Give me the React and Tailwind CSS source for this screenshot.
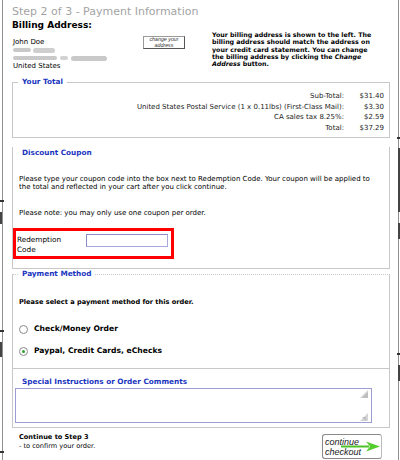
import React from 'react';

const rows = [
  { label: 'Sub-Total:', value: '$31.40' },
  { label: 'United States Postal Service (1 x 0.11lbs) (First-Class Mail):', value: '$3.30' },
  { label: 'CA sales tax 8.25%:', value: '$2.59' },
  { label: 'Total:', value: '$37.29' },
];

function Radio({ checked }) {
  return (
    <div className="w-[9px] h-[9px] rounded-full border border-[#8a8a8a] bg-white flex items-center justify-center shrink-0">
      {checked && <div className="w-[3px] h-[3px] rounded-full bg-[#2fa02f]" />}
    </div>
  );
}

function App() {
  return (
    <div className="relative w-[400px] h-[460px] overflow-hidden bg-white text-black font-['DejaVu_Sans',sans-serif]">
      <div className="ml-[2px] w-[397px] h-[460px] border-x border-[#8f8f8f]">
        {/* billing header */}
        <div className="pl-[9px]">
          <div className="pt-[6px] text-[11px] leading-[12px] text-[#a3a3a3]">Step 2 of 3 - Payment Information</div>
          <div className="mt-[2px] text-[9px] leading-[10px] font-bold">Billing Address:</div>
          <div className="mt-[1px] flex items-start">
            <div className="w-[131px] pl-[1px] pt-[7px] text-[7px] leading-[8px]">
              <div>John Doe</div>
              <div className="h-[8px] flex items-center gap-[2px]">
                <div className="w-[18px] h-[4px] rounded-full bg-[#c9c9c9] blur-[0.6px]" />
                <div className="w-[22px] h-[5px] rounded-full bg-[#cfcfcf] blur-[0.6px]" />
              </div>
              <div className="h-[8px] flex items-center gap-[3px]">
                <div className="w-[44px] h-[4px] rounded-full bg-[#c9c9c9] blur-[0.6px]" />
                <div className="w-[8px] h-[4px] rounded-full bg-[#d2d2d2] blur-[0.6px]" />
                <div className="w-[36px] h-[5px] rounded-full bg-[#c9c9c9] blur-[0.6px]" />
              </div>
              <div>United States</div>
            </div>
            <div className="mt-[5px] w-[42px] h-[13px] border border-[#9a9a9a] border-r-[#555] border-b-[#555] bg-white flex flex-col items-center justify-center font-['Liberation_Sans',sans-serif] italic text-[5.3px] leading-[5.3px] text-[#333]">
              <span>change your</span>
              <span>address</span>
            </div>
            <div className="ml-[27px] w-[180px] whitespace-nowrap text-[6.3px] leading-[7.3px] font-bold">
              Your billing address is shown to the left. The<br />
              billing address should match the address on<br />
              your credit card statement. You can change<br />
              the billing address by clicking the <i>Change</i><br />
              <i>Address</i> button.
            </div>
          </div>
        </div>

        {/* totals */}
        <fieldset className="mt-[7px] ml-[9px] w-[378px] border border-[#c8c8c8] px-[5px] pt-[4px] pb-[4px]">
          <legend className="px-[4px] text-[7.3px] leading-[10px] font-bold text-[#1a35c0]">Your Total</legend>
          <div className="grid grid-cols-[1fr_36px] gap-x-[4px] text-[7px] leading-[10.5px] text-right text-[#222]">
            {rows.map((r) => (
              <React.Fragment key={r.label}>
                <span>{r.label}</span>
                <span>{r.value}</span>
              </React.Fragment>
            ))}
          </div>
        </fieldset>

        {/* coupon */}
        <div className="mt-[9px] ml-[9px] w-[378px] border-x border-b border-[#c8c8c8] px-[6px] pt-[1px] pb-[9px] text-[7px] leading-[8px]">
          <div className="ml-[3px] text-[7.3px] leading-[10px] font-bold text-[#1a35c0]">Discount Coupon</div>
          <p className="mt-[17px]">
            Please type your coupon code into the box next to Redemption Code. Your coupon will be applied to the total and reflected in your cart after you click continue.
          </p>
          <p className="mt-[18px]">Please note: you may only use one coupon per order.</p>
          <div className="mt-[11px] -ml-[6px] w-[161px] h-[31px] border-[3px] border-[#ff0000] pl-[1px] pt-[4px] flex items-start text-[7.3px] leading-[10px]">
            <div className="w-[69px]">Redemption<br />Code</div>
            <div className="mt-[-1px] w-[82px] h-[13px] border border-[#a8a8dc] border-t-[#8c8cc8] border-l-[#8c8cc8] bg-white" />
          </div>
        </div>

        {/* payment method */}
        <fieldset className="ml-[9px] w-[378px] border border-[#c8c8c8] [border-top-style:dotted] px-[6px] pt-[19px] pb-[12px]">
          <legend className="px-[3px] text-[7.3px] leading-[10px] font-bold text-[#1a35c0]">Payment Method</legend>
          <div className="text-[6.6px] leading-[8px] font-bold">Please select a payment method for this order.</div>
          <div className="mt-[18px] h-[10px] flex items-center gap-[6px] text-[7.6px] font-bold">
            <Radio />
            <span>Check/Money Order</span>
          </div>
          <div className="mt-[12px] h-[10px] flex items-center gap-[6px] text-[7.6px] font-bold">
            <Radio checked />
            <span>Paypal, Credit Cards, eChecks</span>
          </div>
        </fieldset>

        {/* comments */}
        <div className="ml-[9px] w-[378px] border-x border-b border-[#c8c8c8] pl-[2px] pt-[8px] pb-[4px]">
          <div className="ml-[7px] text-[7.3px] leading-[10px] font-bold text-[#1a35c0]">Special Instructions or Order Comments</div>
          <div className="mt-[1px] w-[357px] h-[35px] border border-[#9d9dd6] bg-white flex justify-end">
            <div className="w-[10px] mr-[2px] py-[1px] flex flex-col justify-between items-center">
              <svg width="8" height="8" viewBox="0 0 8 8">
                <path d="M8 0 L8 8 L0 8 Z" fill="#d4d4d4" />
                <path d="M8 2 L8 8 L2 8 Z" fill="#bdbdbd" />
              </svg>
              <svg width="8" height="8" viewBox="0 0 8 8">
                <path d="M8 0 L8 8 L0 8 Z" fill="#d4d4d4" />
                <path d="M2 4 L6 4 L6 8 Z" fill="#bdbdbd" />
              </svg>
            </div>
          </div>
        </div>

        {/* continue */}
        <div className="pl-[16px] pr-[16px] flex items-start">
          <div className="mt-[5px] text-[6.6px] leading-[9px]">
            <div className="font-bold">Continue to Step 3</div>
            <div>- to confirm your order.</div>
          </div>
          <div className="relative ml-auto mt-[6px] w-[60px] h-[25px] rounded-[3px] border border-[#8a8a8a] border-r-[#bbb] bg-white pl-[2px] pt-[2px] font-['Liberation_Sans',sans-serif] italic text-[9px] leading-[10px] text-[#222]">
            <div>continue</div>
            <div>checkout</div>
            <svg className="absolute left-[18px] top-[6px]" width="40" height="11" viewBox="0 0 40 11">
              <path d="M0 5.5 L28 5.5" stroke="#4cc12a" strokeWidth="2" />
              <path d="M25 0.5 L39 5.5 L25 10.5 L29 5.5 Z" fill="#55cc2e" />
            </svg>
          </div>
        </div>
      </div>

      {/* collage edge artifacts */}
      <div className="absolute left-0 top-[200px] w-[4px] h-[2px] bg-[#333]" />
      <div className="absolute left-0 top-[212px] w-[2px] h-[12px] bg-[#444]" />
      <div className="absolute left-0 top-[330px] w-[4px] h-[2px] bg-[#333]" />
      <div className="absolute left-0 top-[342px] w-[2px] h-[15px] bg-[#444]" />
      <div className="absolute left-0 top-[451px] w-[4px] h-[2px] bg-[#333]" />
      <div className="absolute right-0 top-[137px] w-[3px] h-[2px] bg-[#333]" />
      <div className="absolute right-0 top-[148px] w-[2px] h-[64px] bg-[#444]" />
      <div className="absolute right-0 top-[223px] w-[2px] h-[16px] bg-[#444]" />
      <div className="absolute right-0 top-[353px] w-[3px] h-[2px] bg-[#333]" />
      <div className="absolute right-0 top-[365px] w-[2px] h-[16px] bg-[#444]" />
    </div>
  );
}

export default App;
